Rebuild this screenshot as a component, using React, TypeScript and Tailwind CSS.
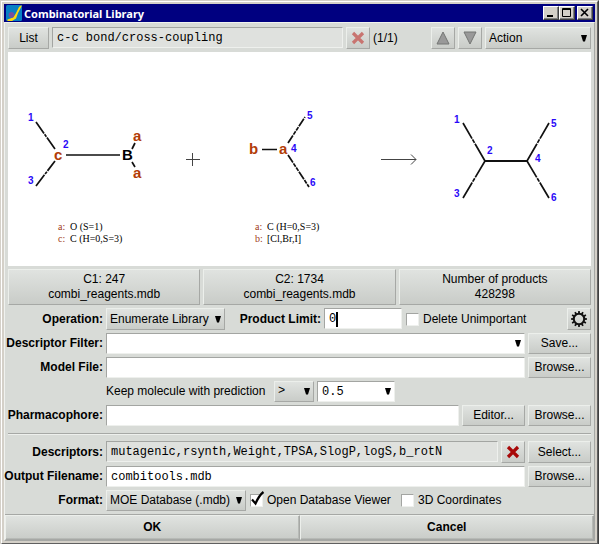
import type { ComponentProps, ReactNode } from "react";

const BEVEL =
  "border border-t-[#ecefeb] border-l-[#ecefeb] border-r-[#a6a8a5] border-b-[#a6a8a5] bg-linear-to-b from-[#e0e3e0] to-[#c9ccc8]";
const SUNKEN =
  "border border-t-[#a3a5a2] border-l-[#a3a5a2] border-r-[#eef0ed] border-b-[#eef0ed]";

function Btn({ className = "", ...rest }: ComponentProps<"button">) {
  return (
    <button
      type="button"
      className={`flex shrink-0 items-center justify-center whitespace-nowrap ${BEVEL} ${className}`}
      {...rest}
    />
  );
}

function Field({ className = "", ...rest }: ComponentProps<"input">) {
  return (
    <input
      type="text"
      spellCheck={false}
      className={`h-[21px] min-w-0 px-1 font-['Liberation_Mono',monospace] text-[12px] outline-none ${SUNKEN} ${className}`}
      {...rest}
    />
  );
}

function Arrow() {
  return (
    <svg width="6" height="7" viewBox="0 0 6 7" className="pointer-events-none z-10 col-start-1 row-start-1 mr-1 self-center justify-self-end" aria-hidden="true">
      <path d="M0 0H6L4 6.500H2Z" fill="#000" />
    </svg>
  );
}

function Drop({ id, label, className, text }: { id: string; label: string; className: string; text: string }) {
  return (
    <div className={`grid shrink-0 ${className}`}>
      <select
        id={id}
        aria-label={label}
        className={`col-start-1 row-start-1 w-full appearance-none pl-[3px] outline-none ${BEVEL}`}
      >
        <option>{text}</option>
      </select>
      <Arrow />
    </div>
  );
}

function Combo({ id, label, className, value }: { id: string; label: string; className: string; value: string }) {
  return (
    <div className={`grid min-w-0 ${className}`}>
      <Field id={id} aria-label={label} defaultValue={value} className="col-start-1 row-start-1 w-full bg-white" />
      <Arrow />
    </div>
  );
}

function Row({ label, htmlFor, tall, children }: { label?: string; htmlFor?: string; tall?: boolean; children: ReactNode }) {
  return (
    <div className={`flex gap-[3px] ${tall ? "h-[22px]" : "h-[21px]"}`}>
      <div className="flex w-[95px] shrink-0 items-center justify-end whitespace-nowrap font-bold">
        {label && <label htmlFor={htmlFor}>{label}</label>}
      </div>
      {children}
    </div>
  );
}

function Check({ label, checked }: { label: string; checked?: boolean }) {
  return (
    <label className="flex items-center gap-1 whitespace-nowrap">
      <span className="grid">
        <input
          type="checkbox"
          defaultChecked={checked}
          className={`peer col-start-1 row-start-1 size-[13px] appearance-none bg-white ${SUNKEN}`}
        />
        <svg width="13" height="13" viewBox="0 0 13 13" className="pointer-events-none invisible z-10 col-start-1 row-start-1 overflow-visible peer-checked:visible" aria-hidden="true">
          <path d="M2 5.500L5.500 9.500C7.500 5 9.500 1 13.500 -2" fill="none" stroke="#000" strokeWidth="2.2" />
        </svg>
      </span>
      {label}
    </label>
  );
}

function Cross({ color }: { color: string }) {
  return (
    <svg width="14" height="14" viewBox="0 0 14 14" aria-hidden="true">
      <path d="M2 2L12 12M12 2L2 12" stroke={color} strokeWidth="3.2" />
    </svg>
  );
}

function Gear() {
  return (
    <svg width="18" height="18" viewBox="-9 -9 18 18" aria-hidden="true">
      <circle r="5.2" fill="none" stroke="#111" strokeWidth="2" />
      {[0, 30, 60, 90, 120, 150, 180, 210, 240, 270, 300, 330].map((a) => (
        <path key={a} d="M-.8 -8H.8L1 -5.500H-1Z" fill="#111" transform={`rotate(${a})`} />
      ))}
    </svg>
  );
}

function Logo() {
  return (
    <svg width="16" height="16" viewBox="0 0 16 16" aria-hidden="true">
      <rect width="16" height="16" rx="1.5" fill="#0880c4" />
      <path d="M15.500 0L13 2L9.500 9L7 12.500L1.500 14.500V16H6L10 13.500L12 8L15.500 1.500Z" fill="#ffd90a" />
      <circle cx="5.5" cy="9.8" r="2.9" fill="#7450a0" />
    </svg>
  );
}

type Label = [number, number, string];
const POSITIONS: Label[] = [
  [28, 121, "1"], [63, 148, "2"], [28, 184, "3"],
  [291, 152, "4"], [307, 119, "5"], [310, 186, "6"],
  [454, 123, "1"], [487, 154, "2"], [454, 197, "3"],
  [535, 162, "4"], [551, 127, "5"], [551, 201, "6"],
];
const ATOMS: Label[] = [
  [54, 160, "c"], [133, 141, "a"], [133, 178, "a"], [249, 154, "b"], [279, 154, "a"],
];
const LEGEND: [number, number, string, string][] = [
  [58, 230, "a:", "O (S=1)"], [58, 242, "c:", "C (H=0,S=3)"],
  [255, 230, "a:", "C (H=0,S=3)"], [255, 242, "b:", "[Cl,Br,I]"],
];

function Reaction() {
  return (
    <svg viewBox="8 52 583 214" className="block h-auto w-full bg-white" role="img" aria-label="Cross-coupling reaction">
      <g fill="none" stroke="#111" strokeWidth="1.7">
        <path d="M36 122L55 149M36 186L55 161" strokeDasharray="14 1 3 1 20" />
        <path d="M66 155H120M132 149L135 143M132 162L135 167M262 149.500H277" />
        <path d="M288 143L305 117M288 155L309 187" strokeDasharray="9 1 4 1 4 1" />
        <path d="M463 123L485 161M463 198L485 161M549 123L527 161M549 198L527 161" strokeDasharray="18 1 4 1 20" />
        <path d="M484 161H528" strokeWidth="2" />
      </g>
      <path d="M186 159.500H200M192.500 153V166M381 159.500H416M411 154.500L416 159.500L411 164.500" fill="none" stroke="#444" />
      <g fontFamily="Liberation Sans, sans-serif" fontWeight="bold">
        <g fontSize="10" fill="#2a08f8">
          {POSITIONS.map(([x, y, t]) => <text key={`${x}-${y}`} x={x} y={y}>{t}</text>)}
        </g>
        <g fontSize="15" fill="#b23c08">
          {ATOMS.map(([x, y, t]) => <text key={`${x}-${y}`} x={x} y={y}>{t}</text>)}
        </g>
        <text x="122" y="160" fontSize="15">B</text>
      </g>
      <g fontFamily="Liberation Serif, serif" fontSize="10">
        {LEGEND.map(([x, y, k, t]) => (
          <g key={`${x}-${y}`}>
            <text x={x} y={y} fill="#a03c18">{k}</text>
            <text x={x + 12} y={y}>{t}</text>
          </g>
        ))}
      </g>
    </svg>
  );
}

function TitleButton({ label, children }: { label: string; children: ReactNode }) {
  return (
    <button
      type="button"
      aria-label={label}
      className="grid h-[14px] w-4 place-items-center border border-t-white border-l-white border-r-[#404040] border-b-[#404040] bg-[#d4d0c8] shadow-[inset_-1px_-1px_0_#808080]"
    >
      <svg width="12" height="10" viewBox="0 0 12 10" fill="none" stroke="#000" aria-hidden="true">{children}</svg>
    </button>
  );
}

export default function App() {
  return (
    <div className="border border-t-[#d4d0c8] border-l-[#d4d0c8] border-r-[#404040] border-b-[#404040] bg-[#d4d0c8] font-['Liberation_Sans',Arial,sans-serif] text-[12px] leading-[15px] text-black">
      <div className="border border-t-white border-l-white border-r-[#606060] border-b-[#606060] p-[2px]">
        <header className="flex h-[18px] items-center bg-[#000080] pr-[2px] pl-[2px]">
          <Logo />
          <h1 className="ml-[2px] flex-1 font-['Noto_Sans',sans-serif] text-[11px] font-bold text-white">Combinatorial Library</h1>
          <TitleButton label="Minimize"><path d="M2 8H8" strokeWidth="2" /></TitleButton>
          <TitleButton label="Maximize"><path d="M1.500 .5H9.500V8.500H1.500ZM1 1.500H10" /></TitleButton>
          <span className="w-[2px]" />
          <TitleButton label="Close"><path d="M2 1L9 8M9 1L2 8" strokeWidth="1.6" /></TitleButton>
        </header>
        <main className="border border-t-[#f0f2ef] border-l-[#f0f2ef] border-r-[#a6a8a5] border-b-[#a6a8a5] bg-[#d8dbd7]">
          <div className="flex flex-col gap-[3px] px-[3px] pt-1">
            <div className="flex h-[22px] gap-[3px]">
              <Btn className="w-[41px]">List</Btn>
              <Field aria-label="Reaction" readOnly defaultValue="c-c bond/cross-coupling" className="flex-1 bg-[#dfe1de]" />
              <Btn className="w-6" aria-label="Clear reaction"><Cross color="#c87470" /></Btn>
              <span className="w-[55px] self-center">(1/1)</span>
              <Btn className="w-6" aria-label="Previous">
                <svg width="16" height="14" viewBox="0 0 16 14" aria-hidden="true"><path d="M8 1L14 13H2Z" fill="#999" stroke="#747674" /></svg>
              </Btn>
              <Btn className="w-6" aria-label="Next">
                <svg width="16" height="14" viewBox="0 0 16 14" aria-hidden="true"><path d="M8 13L14 1H2Z" fill="#999" stroke="#747674" /></svg>
              </Btn>
              <Drop id="action" label="Action" className="w-[106px]" text="Action" />
            </div>
            <Reaction />
            <div className="grid grid-cols-3 gap-[3px]">
              <Btn className="h-9 flex-col">C1: 247<br />combi_reagents.mdb</Btn>
              <Btn className="h-9 flex-col">C2: 1734<br />combi_reagents.mdb</Btn>
              <Btn className="h-9 flex-col">Number of products<br />428298</Btn>
            </div>
            <Row label="Operation:" htmlFor="operation" tall>
              <Drop id="operation" label="Operation" className="w-[119px]" text="Enumerate Library" />
              <label htmlFor="limit" className="w-[93px] self-center text-right font-bold whitespace-nowrap">Product Limit:</label>
              <div className="grid w-[78px]">
                <Field id="limit" defaultValue="0" className="col-start-1 row-start-1 w-full bg-white caret-transparent" />
                <span className="pointer-events-none z-10 col-start-1 row-start-1 ml-3 h-[15px] w-[2px] self-center bg-black" />
              </div>
              <div className="ml-px flex flex-1"><Check label="Delete Unimportant" /></div>
              <Btn className="w-6" aria-label="Settings"><Gear /></Btn>
            </Row>
            <Row label="Descriptor Filter:" htmlFor="filter">
              <Combo id="filter" label="Descriptor Filter" className="flex-1" value="" />
              <Btn className="w-[63px]">Save...</Btn>
            </Row>
            <Row label="Model File:" htmlFor="model">
              <Field id="model" className="flex-1 bg-white" />
              <Btn className="w-[63px]">Browse...</Btn>
            </Row>
            <Row>
              <span className="w-[165px] self-center whitespace-nowrap">Keep molecule with prediction</span>
              <Drop id="cmp" label="Comparison" className="w-10 font-['Liberation_Mono',monospace]" text=">" />
              <Combo id="threshold" label="Prediction threshold" className="w-[78px]" value="0.5" />
            </Row>
            <Row label="Pharmacophore:" htmlFor="pharm">
              <Field id="pharm" className="flex-1 bg-white" />
              <Btn className="w-[63px]">Editor...</Btn>
              <Btn className="w-[63px]">Browse...</Btn>
            </Row>
            <hr className="mt-1 mb-[3px] h-[2px] border-t border-b border-t-[#a6a8a5] border-b-[#eef0ed]" />
            <Row label="Descriptors:" htmlFor="descriptors" tall>
              <Field id="descriptors" readOnly defaultValue="mutagenic,rsynth,Weight,TPSA,SlogP,logS,b_rotN" className="flex-1 bg-[#dfe1de]" />
              <Btn className="w-6" aria-label="Clear descriptors"><Cross color="#a80808" /></Btn>
              <Btn className="w-[63px]">Select...</Btn>
            </Row>
            <Row label="Output Filename:" htmlFor="output">
              <Field id="output" defaultValue="combitools.mdb" className="flex-1 bg-white" />
              <Btn className="w-[63px]">Browse...</Btn>
            </Row>
            <Row label="Format:" htmlFor="format">
              <Drop id="format" label="Format" className="w-[140px]" text="MOE Database (.mdb)" />
              <div className="ml-px flex w-[148px]"><Check label="Open Database Viewer" checked /></div>
              <Check label="3D Coordinates" />
            </Row>
          </div>
          <footer className="mt-[3px] grid grid-cols-2 border-t border-[#a6a8a5]">
            <Btn className="h-[25px] font-bold shadow-[inset_-1px_-1px_0_#b7bab6]">OK</Btn>
            <Btn className="h-[25px] font-bold shadow-[inset_-1px_-1px_0_#b7bab6]">Cancel</Btn>
          </footer>
        </main>
      </div>
    </div>
  );
}
